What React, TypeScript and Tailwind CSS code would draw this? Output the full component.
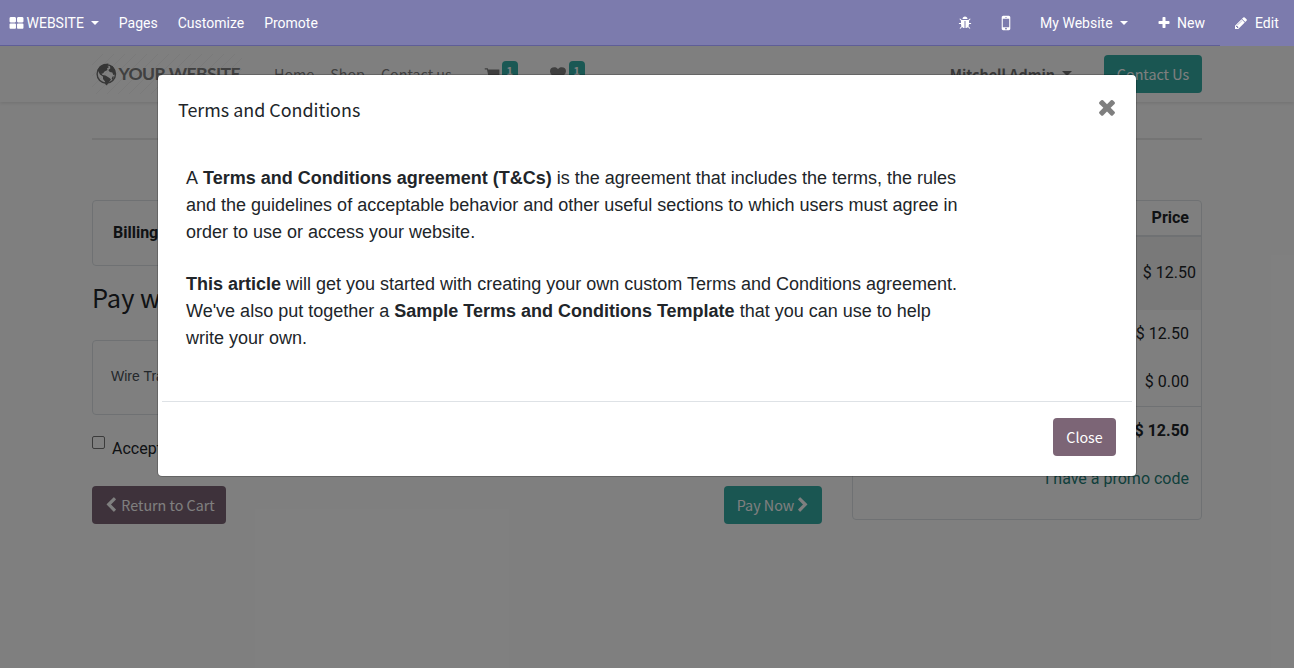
import React from "react";

const paths = {
  thLarge:
    "M832 1024v384q0 52-38 90t-90 38h-512q-52 0-90-38t-38-90v-384q0-52 38-90t90-38h512q52 0 90 38t38 90zm0-768v384q0 52-38 90t-90 38h-512q-52 0-90-38t-38-90v-384q0-52 38-90t90-38h512q52 0 90 38t38 90zm896 768v384q0 52-38 90t-90 38h-512q-52 0-90-38t-38-90v-384q0-52 38-90t90-38h512q52 0 90 38t38 90zm0-768v384q0 52-38 90t-90 38h-512q-52 0-90-38t-38-90v-384q0-52 38-90t90-38h512q52 0 90 38t38 90z",
  plus: "M1600 736v192q0 40-28 68t-68 28h-416v416q0 40-28 68t-68 28h-192q-40 0-68-28t-28-68v-416h-416q-40 0-68-28t-28-68v-192q0-40 28-68t68-28h416v-416q0-40 28-68t68-28h192q40 0 68 28t28 68v416h416q40 0 68 28t28 68z",
  times:
    "M1490 1322q0 40-28 68l-136 136q-28 28-68 28t-68-28l-294-294-294 294q-28 28-68 28t-68-28l-136-136q-28-28-28-68t28-68l294-294-294-294q-28-28-28-68t28-68l136-136q28-28 68-28t68 28l294 294 294-294q28-28 68-28t68 28l136 136q28 28 28 68t-28 68l-294 294 294 294q28 28 28 68z",
  pencil:
    "M491 1536l91-91-235-235-91 91v107h128v128h107zm523-928q0-22-22-22-10 0-17 7l-542 542q-7 7-7 17 0 22 22 22 10 0 17-7l542-542q7-7 7-17zm-54-192l416 416-832 832h-416v-416zm683 96q0 53-37 90l-166 166-416-416 166-165q36-38 90-38 53 0 91 38l235 234q37 39 37 91z",
  chevronLeft:
    "M1427 301l-531 531 531 531q19 19 19 45t-19 45l-166 166q-19 19-45 19t-45-19l-742-742q-19-19-19-45t19-45l742-742q19-19 45-19t45 19l166 166q19 19 19 45t-19 45z",
  chevronRight:
    "M1363 877l-742 742q-19 19-45 19t-45-19l-166-166q-19-19-19-45t19-45l531-531-531-531q-19-19-19-45t19-45l166-166q19-19 45-19t45 19l742 742q19 19 19 45t-19 45z",
  bug: "M1696 960q0 26-19 45t-45 19h-224q0 171-67 290l208 209q19 19 19 45t-19 45q-18 19-45 19t-45-19l-198-197q-5 5-15 13t-42 28.5-65 36.5-82 29-97 13v-896h-128v896q-51 0-101.5-13.5t-87-33-66-39-43.5-32.5l-15-14-183 207q-20 21-48 21-24 0-43-16-19-18-20.5-44.5t15.5-46.5l202-227q-58-114-58-274h-224q-26 0-45-19t-19-45 19-45 45-19h224v-294l-173-173q-19-19-19-45t19-45 45-19 45 19l173 173h844l173-173q19-19 45-19t45 19 19 45-19 45l-173 173v294h224q26 0 45 19t19 45zm-480-576h-640q0-133 93.5-226.5t226.5-93.5 226.5 93.5 93.5 226.5z",
  mobile:
    "M976 1408q0-33-23.5-56.5t-56.5-23.5-56.5 23.5-23.5 56.5 23.5 56.5 56.5 23.5 56.5-23.5 23.5-56.5zm208-160v-704q0-13-9.5-22.5t-22.5-9.5h-512q-13 0-22.5 9.5t-9.5 22.5v704q0 13 9.5 22.5t22.5 9.5h512q13 0 22.5-9.5t9.5-22.5zm-192-848q0-16-16-16h-160q-16 0-16 16t16 16h160q16 0 16-16zm288-16v1024q0 52-38 90t-90 38h-512q-52 0-90-38t-38-90v-1024q0-52 38-90t90-38h512q52 0 90 38t38 90z",
  cart: "M704 1536q0 52-38 90t-90 38-90-38-38-90 38-90 90-38 90 38 38 90zm896 0q0 52-38 90t-90 38-90-38-38-90 38-90 90-38 90 38 38 90zm128-1088v512q0 24-16.5 42.5t-40.5 21.5l-1044 122q13 60 13 70 0 16-24 64h920q26 0 45 19t19 45-19 45-45 19h-1024q-26 0-45-19t-19-45q0-11 8-31.5t16-36 21.5-40 15.5-29.5l-177-823h-204q-26 0-45-19t-19-45 19-45 45-19h256q16 0 28.5 6.5t19.5 15.5 13 24.5 8 26 5.5 29.5 4.5 26h1201q26 0 45 19t19 45z",
  heart:
    "M896 1664q-26 0-44-18l-624-602q-10-8-27.5-26t-55.5-65.5-68-97.5-53.5-121-23.5-138q0-220 127-344t351-124q62 0 126.5 21.5t120 58 95.5 68.5 76 68q36-36 76-68t95.5-68.5 120-58 126.5-21.5q224 0 351 124t127 344q0 221-229 450l-623 600q-18 18-44 18z",
};

function Icon({ name, className }: { name: keyof typeof paths; className: string }) {
  return (
    <svg viewBox="0 0 1792 1792" fill="currentColor" className={"shrink-0 " + className}>
      <path d={paths[name]} />
    </svg>
  );
}

function Caret({ className }: { className: string }) {
  return (
    <svg viewBox="0 0 10 5" fill="currentColor" className={"shrink-0 " + className}>
      <path d="M0 0h10L5 5z" />
    </svg>
  );
}

function TopBar() {
  return (
    <nav className="relative z-20 flex h-[46px] font-[Roboto,sans-serif] text-sm leading-[21px] text-white">
      <div className="flex h-full flex-1 items-center border-b border-[#5f5e97] bg-[#7c7bad] pt-px pl-[9px]">
        <div className="flex items-center">
          <Icon name="thLarge" className="mr-[2.5px] size-[15px]" />
          WEBSITE
          <Caret className="mb-px ml-[7px] h-1 w-2" />
        </div>
        <span className="ml-5">Pages</span>
        <span className="ml-5">Customize</span>
        <span className="ml-5">Promote</span>
        <div className="ml-auto flex items-center pr-[15px]">
          <Icon name="bug" className="size-[14px]" />
          <Icon name="mobile" className="ml-6 size-5" />
          <span className="ml-6">My Website</span>
          <Caret className="mb-px ml-[7px] h-1 w-2" />
          <Icon name="plus" className="ml-[29px] size-[14px]" />
          <span className="ml-[6.5px]">New</span>
        </div>
      </div>
      <div className="flex h-full w-[74px] items-center bg-[#7c7bad] pl-[14px]">
        <Icon name="pencil" className="size-[14px]" />
        <span className="ml-[7px]">Edit</span>
      </div>
    </nav>
  );
}

function Logo() {
  return (
    <svg width="150" height="40" viewBox="0 0 150 40" className="shrink-0">
      <defs>
        <pattern id="hatch" width="11" height="11" patternUnits="userSpaceOnUse">
          <path d="M-2 13L13 -2" stroke="#f4f4f4" strokeWidth="1" />
        </pattern>
      </defs>
      <rect width="150" height="40" fill="url(#hatch)" />
      <circle cx="14.3" cy="20" r="9.2" fill="none" stroke="#727272" strokeWidth="1.4" />
      <path
        d="M5.5 16l2.5-4 4-2 4.500-.5-1 2.500 1.500 1-2 1.500.5 1.500-3 1.500-1.500 2-1.500 0 1 1.500 3 .5 4 2.500 1.500 1.500-1.500 2-1.500 1.500-1 2.500-1.500-1-.5-3-2-2.500 0-2.500-3-2zM18 11.500l2.500.5 2.500 4 .3 4.500-2 .5-1-2.500-2.500-.5-1.500-2 2-1.500zM20.500 22.500l1.500 0-1.500 3.500-.8-1z"
        fill="#6c6c6c"
      />
      <text
        x="26.5"
        y="26"
        fontFamily="Lato, sans-serif"
        fontWeight="700"
        fontSize="17.5"
        fill="#808080"
        textLength="122"
      >
        YOUR WEBSITE
      </text>
    </svg>
  );
}

function Badge() {
  return (
    <span className="flex h-[18px] w-4 justify-center rounded bg-[#35b1a9] text-[10.8px] leading-[18px] font-bold text-white">
      1
    </span>
  );
}

function SiteHeader() {
  return (
    <header className="h-[56px] bg-white font-['Noto_Sans_CJK_SC',sans-serif] text-[14.3px] leading-6 text-[#808080] shadow-[0_1px_4px_rgba(0,0,0,0.13)]">
      <div className="mx-auto flex h-full w-[1110px] items-center">
        <Logo />
        <span className="ml-8">Home</span>
        <span className="ml-4">Shop</span>
        <span className="ml-4">Contact us</span>
        <Icon name="cart" className="ml-8 size-4 text-[#7f7f7f]" />
        <div className="mb-2 ml-[2px]">
          <Badge />
        </div>
        <Icon name="heart" className="ml-8 size-4 text-[#7f7f7f]" />
        <div className="mb-2 ml-[3px]">
          <Badge />
        </div>
        <span className="ml-auto font-bold text-[#707070]">Mitchell Admin</span>
        <Caret className="mr-8 mb-[2px] ml-[7px] h-[5px] w-[10px] text-[#707070]" />
        <div className="flex h-[38px] w-[98px] items-center justify-center rounded bg-[#35aca5] text-white">
          Contact Us
        </div>
      </div>
    </header>
  );
}

function OrderSummary() {
  return (
    <aside className="h-[320px] w-[350px] rounded border border-[#dee2e6] text-right text-base leading-6">
      <div className="h-[36px] border-b-2 border-[#dee2e6] pt-[5px] pr-3 font-bold">Price</div>
      <div className="flex h-[73px] items-center justify-end bg-[#f2f2f2] pr-[5px] pb-[2px]">$ 12.50</div>
      <div className="h-12 pt-3 pr-3">$ 12.50</div>
      <div className="h-12 pt-3 pr-3">$ 0.00</div>
      <div className="h-12 border-t border-[#dee2e6] pt-3 pr-3 font-bold">$ 12.50</div>
      <div className="pt-[13px] pr-3 text-[#1f7e78]">I have a promo code</div>
    </aside>
  );
}

function Checkout() {
  return (
    <main className="mx-auto w-[1110px] pt-9 font-[Roboto,sans-serif] text-[#212529]">
      <div className="h-[2px] bg-[#e8e8e8]" />
      <div className="flex items-start gap-[30px] pt-[60px]">
        <section className="w-[730px]">
          <div className="flex h-[66px] items-center rounded border border-[#dee2e6] px-5 text-base leading-6 font-bold">
            Billing
          </div>
          <h3 className="mt-[14px] font-['Noto_Sans_CJK_SC',sans-serif] text-[25.4px] leading-[34px]">Pay with</h3>
          <div className="mt-[26px] flex h-[75px] items-center rounded border border-[#dee2e6] px-[18px] pb-1 font-['Liberation_Sans',sans-serif] text-sm text-[#495057]">
            Wire Transfer
          </div>
          <div className="mt-[21px] flex h-[50px] items-start">
            <span className="size-[13px] rounded-[2px] border border-[#767676] bg-white" />
            <span className="mt-px ml-[7px] text-base leading-6">Accept</span>
          </div>
          <div className="flex justify-between font-['Noto_Sans_CJK_SC',sans-serif] text-[14.3px] text-white">
            <div className="flex h-[38px] w-[134px] items-center justify-center gap-[2px] rounded bg-[#7c6576]">
              <Icon name="chevronLeft" className="size-4" />
              Return to Cart
            </div>
            <div className="flex h-[38px] w-[98px] items-center justify-center gap-px rounded bg-[#35aca5] pl-[2px]">
              Pay Now
              <Icon name="chevronRight" className="size-4" />
            </div>
          </div>
        </section>
        <OrderSummary />
      </div>
    </main>
  );
}

function TermsModal() {
  return (
    <div className="absolute inset-0 z-10 flex justify-center bg-black/50 pt-[74px]">
      <div className="flex h-[403px] w-[980px] flex-col rounded-[5px] border border-black/20 bg-white bg-clip-padding text-[#212529]">
        <div className="flex h-[70px] items-center justify-between pr-[17px] pb-[2px] pl-5">
          <h4 className="font-['Noto_Sans_CJK_SC',sans-serif] text-[17.9px] leading-[30px]">
            Terms and Conditions
          </h4>
          <Icon name="times" className="mb-1 size-6 text-[#7f7f7f]" />
        </div>
        <div className="h-[256px] px-7 pt-5 font-['Liberation_Sans',sans-serif] text-lg leading-[27px]">
          <p className="w-[790px]">
            A <b className="ml-px">Terms and Conditions agreement (T&amp;Cs)</b> is the agreement that includes the
            terms, the rules
            <br />
            and the guidelines of acceptable behavior and other useful sections to which users must agree in
            <br />
            order to use or access your website.
          </p>
          <p className="mt-[25px] w-[790px]">
            <b>This article</b> will get you started with creating your own custom Terms and Conditions agreement.
            <br />
            We've also put together a <b>Sample Terms and Conditions Template</b> that you can use to help
            <br />
            write your own.
          </p>
        </div>
        <div className="mx-1 flex justify-end border-t border-[#dee2e6] px-4 pt-4">
          <button className="h-[38px] w-[63px] rounded bg-[#7c6576] font-['Noto_Sans_CJK_SC',sans-serif] text-[14.3px] text-white">
            Close
          </button>
        </div>
      </div>
    </div>
  );
}

export default function App() {
  return (
    <div className="relative h-[668px] w-full overflow-hidden bg-white">
      <TopBar />
      <SiteHeader />
      <Checkout />
      <TermsModal />
    </div>
  );
}
